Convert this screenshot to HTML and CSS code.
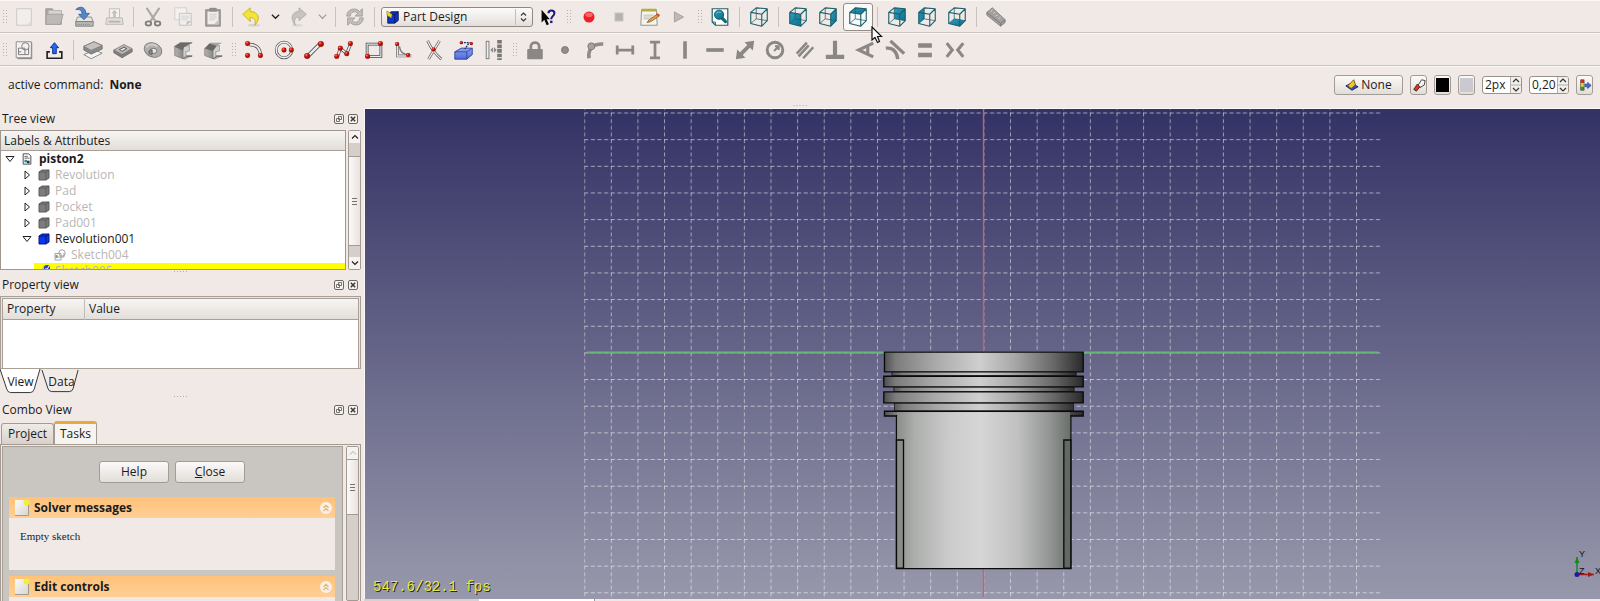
FILE: index.html
```html
<!DOCTYPE html>
<html lang="en">
<head>
<meta charset="utf-8">
<title>piston2 - Part Design</title>
<link rel="stylesheet" href="styles.css">
</head>
<body>
<svg class="defs" aria-hidden="true">
  <defs>
    <linearGradient id="g-paper" x1="0" y1="0" x2="1" y2="1"><stop offset="0" stop-color="#fbfaf9"/><stop offset="1" stop-color="#d9d6d2"/></linearGradient>
    <linearGradient id="g-blue" x1="0" y1="0" x2="0" y2="1"><stop offset="0" stop-color="#8fa4f2"/><stop offset="1" stop-color="#4f69d6"/></linearGradient>
    <radialGradient id="g-red" cx=".35" cy=".3"><stop offset="0" stop-color="#ff9a8a"/><stop offset=".5" stop-color="#f01a10"/><stop offset="1" stop-color="#a80c06"/></radialGradient>
    <linearGradient id="g-teal" x1="0" y1="0" x2="1" y2="1"><stop offset="0" stop-color="#2f9dbb"/><stop offset="1" stop-color="#0d6f8e"/></linearGradient>
    <linearGradient id="g-metal"><stop offset="0" stop-color="#b5b3b1"/><stop offset="1" stop-color="#8b8987"/></linearGradient>
  </defs>
  <symbol id="wire" viewBox="0 0 24 24">
    <path d="M3 7 15 9V22L3 19ZM3 7 9 2 21 3V16L15 22M15 9 21 3" fill="none" stroke="#1b5f6c" stroke-width="1.2" stroke-linejoin="round"/>
    <path d="M9 2V14L3 19M9 14 21 16" fill="none" stroke="#1b5f6c" stroke-width=".8"/>
  </symbol>
  <symbol id="dot" viewBox="0 0 6 6"><circle cx="3" cy="3" r="2.6" fill="url(#g-red)" stroke="#8e120c" stroke-width=".5"/></symbol>
  <symbol id="float" viewBox="0 0 10 10">
    <rect x=".5" y=".5" width="9" height="9" rx="1.5" fill="#f6f2ee" stroke="#6b6762"/>
    <path d="M4.500 2.500H7.500V5.500H4.500ZM2.500 4.500H5.500V7.500H2.500Z" fill="#f6f2ee" stroke="#5a5651" stroke-width=".8"/>
  </symbol>
  <symbol id="shut" viewBox="0 0 10 10">
    <rect x=".5" y=".5" width="9" height="9" rx="1.5" fill="#f6f2ee" stroke="#6b6762"/>
    <path d="M2.800 2.800 7.200 7.200M7.200 2.800 2.800 7.200" stroke="#3c3a37" stroke-width="1.5"/>
  </symbol>
  <symbol id="boxgray" viewBox="0 0 12 12">
    <path d="M1 3 4 1H11V9L8 11H1Z" fill="#7d7d7d" stroke="#5c5c5c"/><path d="M1 3H8L11 1M8 3V11" fill="none" stroke="#555" stroke-width=".8"/>
  </symbol>
  <symbol id="boxblue" viewBox="0 0 12 12">
    <path d="M1 3 4 1H11V9L8 11H1Z" fill="#0a35f5" stroke="#081a70"/><path d="M1 3H8L11 1M8 3V11" fill="none" stroke="#07155c" stroke-width=".9"/>
  </symbol>
  <symbol id="sketchlet" viewBox="0 0 12 12">
    <circle cx="8" cy="4" r="3.200" fill="none" stroke="#a2a2a2"/><path d="M1 4.500H7V11H1ZM3 8H10V4" fill="none" stroke="#a2a2a2"/><rect x="1.500" y="6" width="2" height="3" fill="#8d8d8d"/>
  </symbol>
  <symbol id="note" viewBox="0 0 16 18">
    <rect x="1" y="1" width="13" height="15" fill="url(#g-paper)"/><path d="M1 16.500H14.500V5" fill="none" stroke="#a09a92"/><circle cx="12.500" cy="3.500" r="3" fill="#f2ee3c"/>
  </symbol>
  <symbol id="fold" viewBox="0 0 12 12">
    <circle cx="6" cy="6" r="6" fill="#f7f1ea"/><path d="M3.500 5.800 6 3.300 8.500 5.800M3.500 9 6 6.500 8.500 9" fill="none" stroke="#e9b579" stroke-width="1.300"/>
  </symbol>
</svg>

<header class="toolbars">
  <div class="bar" role="toolbar" aria-label="File">
    <span class="handle first"></span>
    <button class="tool" aria-label="New"><svg class="ico" viewBox="0 0 24 24"><path d="M4 3H20V21H4Z" fill="#f1eeec" stroke="#cbc7c3"/><path d="M20 16 15 21H20Z" fill="#dedad7"/></svg></button>
    <button class="tool" aria-label="Open"><svg class="ico" viewBox="0 0 24 24"><path d="M3 3H10L12 5H20V20H3Z" fill="#aaa7a4" stroke="#999"/><path d="M6 5H20V10H6Z" fill="#d6d3d1"/><path d="M4 9H22L19 20H3Z" fill="#bcb9b6" stroke="#a4a19e"/></svg></button>
    <button class="tool" aria-label="Save"><svg class="ico" viewBox="0 0 24 24"><path d="M5 12H20L22 17H3Z" fill="#e4e4e2" stroke="#8d8d8b"/><path d="M3 17H22V22H3Z" fill="#b9b9b7" stroke="#7d7d7b"/><path d="M5 20H18" stroke="#777" stroke-dasharray="1 1"/><path d="M3 4C6 0 14 0 14 8H18L12 15 6 9H10C10 5 7 3 3 4Z" fill="#5587c6" stroke="#2c5896" stroke-width=".8"/></svg></button>
    <button class="tool" aria-label="Print"><svg class="ico" viewBox="0 0 24 24"><path d="M7 3H18V13H7Z" fill="#f5f3f1" stroke="#bdbab7"/><path d="M12.500 4 16 8H14V12H11V8H9Z" fill="#c3c0bd"/><path d="M4 13H21L22 20H3Z" fill="#e3e0dd" stroke="#b9b6b3"/><path d="M6 17H19" stroke="#b5b2af" stroke-width="2"/></svg></button>
    <span class="sep"></span>
    <button class="tool" aria-label="Cut"><svg class="ico" viewBox="0 0 24 24"><path d="M5 2 15 17M19 2 9 17" stroke="#aaa7a4" stroke-width="2.200"/><ellipse cx="7" cy="19" rx="3" ry="2.300" fill="none" stroke="#807d7a" stroke-width="2"/><ellipse cx="17" cy="19" rx="3" ry="2.300" fill="none" stroke="#807d7a" stroke-width="2"/></svg></button>
    <button class="tool" aria-label="Copy"><svg class="ico" viewBox="0 0 24 24"><path d="M3 2H16V15H3Z" fill="#f4f2f0" stroke="#d0cdca"/><path d="M8 8H21V21H8Z" fill="#f0eeec" stroke="#c3c0bd"/><path d="M10 11H19M10 13H19M10 15H17" stroke="#d5d2cf"/><path d="M21 16 16 21V17Z" fill="#bbb"/></svg></button>
    <button class="tool" aria-label="Paste"><svg class="ico" viewBox="0 0 24 24"><path d="M4 4H20V22H4Z" fill="#a19e9b" stroke="#8f8c89"/><path d="M6 6H18V20H6Z" fill="#f0eeec"/><rect x="8" y="2" width="8" height="4" fill="#8f8c89"/><path d="M8 9H16M8 11H16M8 13H16M8 15H14" stroke="#cfccc9"/><path d="M18 15 13 20H18Z" fill="#c8c5c2"/></svg></button>
    <span class="sep"></span>
    <button class="tool" aria-label="Undo"><svg class="ico" viewBox="0 0 24 24"><ellipse cx="14" cy="21" rx="7" ry="1.600" fill="#d8d3cf"/><path d="M2 9 10 2V6C19 6 22 14 15 21 17 15 14 12.500 10 12.500V17Z" fill="#f3e43a" stroke="#c9b413"/></svg></button>
    <button class="drop" aria-label="Undo list"><svg class="chev" viewBox="0 0 10 10"><path d="M1 3 5 7 9 3" fill="none" stroke="#222" stroke-width="1.500"/></svg></button>
    <button class="tool" aria-label="Redo"><svg class="ico" viewBox="0 0 24 24"><ellipse cx="10" cy="21" rx="6" ry="1.500" fill="#dcd7d3"/><path d="M20 9 12 2V6C4 6 2 14 8 21 6 15 8 12 12 12V16Z" fill="#c6c3c0" stroke="#b1aeab"/></svg></button>
    <button class="drop" aria-label="Redo list"><svg class="chev" viewBox="0 0 10 10"><path d="M1 3 5 7 9 3" fill="none" stroke="#999" stroke-width="1.300"/></svg></button>
    <span class="sep"></span>
    <button class="tool" aria-label="Refresh"><svg class="ico" viewBox="0 0 24 24"><path d="M3 11C3 3 13 1 17 6L20 3V11H12L15 8C12 5 7 6 7 11Z" fill="#c0bdba" stroke="#a19e9b"/><path d="M21 13C21 21 11 23 7 18L4 21V13H12L9 16C12 19 17 18 17 13Z" fill="#c0bdba" stroke="#a19e9b"/></svg></button>
    <span class="sep"></span>
    <label class="combo"><svg class="comboico" viewBox="0 0 16 16"><path d="M2 5 6 2H14V12L10 15H2Z" fill="#0b37c9" stroke="#06134d"/><path d="M10 5V15M6 5H10L14 2" stroke="#06134d" fill="none"/><path d="M1 1 7 5 6 9 1 6Z" fill="#f2d22d" stroke="#8a7411" stroke-width=".6"/></svg>
      <select class="select" aria-label="Workbench"><option>Part Design</option></select>
      <svg class="updown" viewBox="0 0 8 12"><path d="M1.500 4.500 4 2 6.500 4.500M1.500 7.500 4 10 6.500 7.500" fill="none" stroke="#333" stroke-width="1.100"/></svg></label>
    <button class="tool" aria-label="What's this"><svg class="ico" viewBox="0 0 24 24"><path d="M5 4V18L8 15 10.500 21 13 20 10.500 14.500H14Z" fill="#050505"/><path d="M12.500 8C12.500 4 19 4 19 8 19 11 15.500 11 15.500 14.500" fill="none" stroke="#1a1a80" stroke-width="2.200"/><rect x="14.300" y="16" width="2.600" height="2.600" fill="#1a1a80"/></svg></button>
    <span class="handle"></span>
    <button class="tool" aria-label="Record macro"><svg class="ico" viewBox="0 0 24 24"><circle cx="12" cy="12" r="6" fill="#ee1f25"/><ellipse cx="12" cy="9.500" rx="4" ry="2.500" fill="#f8686a"/></svg></button>
    <button class="tool" aria-label="Stop macro"><svg class="ico" viewBox="0 0 24 24"><rect x="7.500" y="7.500" width="9" height="9" fill="#b5b2af" stroke="#d2cfcc"/></svg></button>
    <button class="tool" aria-label="Edit macros"><svg class="ico" viewBox="0 0 24 24"><path d="M4 4H20L21 21H3Z" fill="#f5f5f0" stroke="#8f8d83"/><path d="M4 3H20V6H4Z" fill="#b5aa43"/><path d="M6 10H17M6 12H15M6 14H12" stroke="#b8b8b4"/><path d="M21 9 12 15 10 18 14 17 23 11Z" fill="#e8a13a" stroke="#7d4a13" stroke-width=".8"/><path d="M20 9.500 22.500 11.500 24 10 21.500 8Z" fill="#d8401f"/></svg></button>
    <button class="tool" aria-label="Run macro"><svg class="ico" viewBox="0 0 24 24"><path d="M7 6.500 17 12 7 17.500Z" fill="#bcb9b6" stroke="#a29f9c"/></svg></button>
    <span class="handle"></span>
    <button class="tool" aria-label="Fit all"><svg class="ico" viewBox="0 0 24 24"><path d="M3.500 3H20.500V21H7L3.500 17.500Z" fill="#fff" stroke="#1c6270" stroke-width="1.300"/><path d="M3.500 17.500H7V21" fill="none" stroke="#1c6270"/><path d="M13 12 18 17" stroke="#16697d" stroke-width="3.500" stroke-linecap="round"/><circle cx="11" cy="9.500" r="5" fill="url(#g-teal)" stroke="#0c4f60"/><path d="M8 8Q10 5.500 13 7" stroke="#7ec6d8" fill="none"/></svg></button>
    <span class="sep"></span>
    <button class="tool" aria-label="Axonometric"><svg class="ico"><use href="#wire"/></svg></button>
    <span class="sep"></span>
    <button class="tool" aria-label="Front"><svg class="ico" viewBox="0 0 24 24"><path d="M3 7 15 9V22L3 19Z" fill="url(#g-teal)"/><use href="#wire"/></svg></button>
    <button class="tool" aria-label="Right"><svg class="ico" viewBox="0 0 24 24"><path d="M15 9 21 3V16L15 22Z" fill="url(#g-teal)"/><use href="#wire"/></svg></button>
    <button class="tool pressed" aria-label="Top"><svg class="ico" viewBox="0 0 24 24"><path d="M3 7 9 2 21 3 15 9Z" fill="url(#g-teal)"/><use href="#wire"/></svg></button>
    <span class="sep"></span>
    <button class="tool" aria-label="Rear"><svg class="ico" viewBox="0 0 24 24"><path d="M9 2 21 3V16L9 14Z" fill="url(#g-teal)"/><use href="#wire"/></svg></button>
    <button class="tool" aria-label="Left"><svg class="ico" viewBox="0 0 24 24"><path d="M3 7 9 2V14L3 19Z" fill="url(#g-teal)"/><use href="#wire"/></svg></button>
    <button class="tool" aria-label="Bottom"><svg class="ico" viewBox="0 0 24 24"><path d="M3 19 9 14 21 16 15 22Z" fill="url(#g-teal)"/><use href="#wire"/></svg></button>
    <span class="sep"></span>
    <button class="tool" aria-label="Measure"><svg class="ico" viewBox="0 0 24 24"><path d="M2 7 8 2 22 15V18L17 22 2 10Z" fill="#a3a19f" stroke="#85827f"/><path d="M2 7 17 19 22 15M17 19V22" fill="none" stroke="#75726f"/><path d="M8 4 6.500 6M11 6.500 9 8M14 9.500 11.500 11M17 12 14.500 14" stroke="#d5d2cf"/></svg></button>
  </div>

  <div class="bar" role="toolbar" aria-label="Sketcher">
    <span class="handle first"></span>
    <button class="tool" aria-label="New sketch"><svg class="ico" viewBox="0 0 24 24"><path d="M5 4H21V22H5Z" fill="#8f8d8b"/><path d="M3.500 3H20V20.500H3.500Z" fill="#f3f1ef" stroke="#8b8987"/><circle cx="13.500" cy="8" r="4" fill="none" stroke="#777"/><path d="M6 10H13V17H6ZM6 14H9M13 17H17V10" fill="none" stroke="#777"/></svg></button>
    <button class="tool" aria-label="Leave sketch"><svg class="ico" viewBox="0 0 24 24"><path d="M7.500 14H4.500V21H20.500V14H17.500" fill="none" stroke="#222" stroke-width="1.800"/><path d="M12.500 4 17 9.500H14.500V16H10.500V9.500H8Z" fill="#2467f5" stroke="#0d2a96"/></svg></button>
    <span class="sep"></span>
    <button class="tool" aria-label="Pad"><svg class="ico" viewBox="0 0 24 24"><path d="M2 17 10 21.500 22 15.500 14 12Z" fill="#f5f5f5" stroke="#777" stroke-width=".9"/><path d="M2 8V12L10 16.500 22 11V7L13 3Z" fill="#8d8b89" stroke="#666" stroke-width=".8"/><path d="M2 8 13 3 22 7 10 12.500Z" fill="#c4c2c0" stroke="#777" stroke-width=".8"/></svg></button>
    <button class="tool" aria-label="Pocket"><svg class="ico" viewBox="0 0 24 24"><path d="M2 12V15L11 20.500 22 14V11Z" fill="#7f7d7b" stroke="#666" stroke-width=".8"/><path d="M2 12 13 6 22 10.500 11 17Z" fill="#b9b7b5" stroke="#777" stroke-width=".8"/><path d="M8 11.500 13 9 16 10.500 11 13.500Z" fill="#e1dfdd" stroke="#555"/></svg></button>
    <button class="tool" aria-label="Revolution"><svg class="ico" viewBox="0 0 24 24"><ellipse cx="12" cy="12" rx="10" ry="7.500" transform="rotate(25 12 12)" fill="#b0aeac" stroke="#7f7d7b"/><ellipse cx="12.500" cy="13" rx="3.800" ry="2.800" fill="#e8e4e2" stroke="#6f6d6b"/><path d="M9 12C6 14 8 18 11 16.500V12Z" fill="#8f8d8b" stroke="#555"/><path d="M4.500 9Q10 3.500 17 8" fill="none" stroke="#cfcdcb" stroke-width="2"/></svg></button>
    <button class="tool" aria-label="Fillet"><svg class="ico" viewBox="0 0 24 24"><path d="M10 9 19 7V13L15 14V18H22L14 22 10 20Z" fill="#d2d0ce" stroke="#85837f" stroke-width=".7"/><path d="M3 8 12 12V21.500L3 18Z" fill="url(#g-metal)" stroke="#777" stroke-width=".8"/><path d="M3 8 9 4H22L14 8Q12 9 12 12Z" fill="#6d6b69" stroke="#5d5b59" stroke-width=".6"/><path d="M12 21.500 16 19H22" fill="none" stroke="#777" stroke-width="1.500"/></svg></button>
    <button class="tool" aria-label="Chamfer"><svg class="ico" viewBox="0 0 24 24"><path d="M10 9 19 7V13L15 14V18H22L14 22 10 20Z" fill="#d2d0ce" stroke="#85837f" stroke-width=".7"/><path d="M3 10 12 13V21.500L3 18Z" fill="url(#g-metal)" stroke="#777" stroke-width=".8"/><path d="M9 4H22L15 8 7 6Z" fill="#a5a3a1"/><path d="M3 10 8 5 16 7.500 12 13Z" fill="#696765"/><path d="M12 21.500 16 19H22" fill="none" stroke="#777" stroke-width="1.500"/></svg></button>
    <span class="handle"></span>
    <button class="tool" aria-label="Arc"><svg class="ico" viewBox="0 0 24 24"><path d="M7 6C14 6 19 10 19 18" fill="none" stroke="#555" stroke-width="3.600"/><path d="M7 6C14 6 19 10 19 18" fill="none" stroke="#eee" stroke-width="2"/><use href="#dot" x="2" y="2" width="6" height="6"/><use href="#dot" x="2" y="15" width="6" height="6"/><use href="#dot" x="16" y="15" width="6" height="6"/></svg></button>
    <button class="tool" aria-label="Circle"><svg class="ico" viewBox="0 0 24 24"><circle cx="12" cy="12" r="8.500" fill="none" stroke="#555" stroke-width="3"/><circle cx="12" cy="12" r="8.500" fill="none" stroke="#eee" stroke-width="1.500"/><use href="#dot" x="9" y="9" width="6" height="6"/><use href="#dot" x="17" y="9" width="6" height="6"/></svg></button>
    <button class="tool" aria-label="Line"><svg class="ico" viewBox="0 0 24 24"><path d="M5 19 19 5" stroke="#555" stroke-width="4.500"/><path d="M5 19 19 5" stroke="#eee" stroke-width="2.500"/><use href="#dot" x="1" y="15" width="7" height="7"/><use href="#dot" x="16" y="2" width="7" height="7"/></svg></button>
    <button class="tool" aria-label="Polyline"><svg class="ico" viewBox="0 0 24 24"><path d="M5 19 8 10 15 16 19 6" fill="none" stroke="#555" stroke-width="3.500"/><path d="M5 19 8 10 15 16 19 6" fill="none" stroke="#eee" stroke-width="1.800"/><use href="#dot" x="1" y="16" width="6" height="6"/><use href="#dot" x="5" y="7" width="6" height="6"/><use href="#dot" x="12" y="13" width="6" height="6"/><use href="#dot" x="16" y="2" width="6" height="6"/></svg></button>
    <button class="tool" aria-label="Rectangle"><svg class="ico" viewBox="0 0 24 24"><path d="M4.500 5.500H19.500V19H4.500Z" fill="none" stroke="#444" stroke-width="3"/><path d="M4.500 5.500H19.500V19H4.500Z" fill="none" stroke="#eee" stroke-width="1.300"/><use href="#dot" x="2" y="16" width="6" height="6"/><use href="#dot" x="16" y="2" width="6" height="6"/></svg></button>
    <button class="tool" aria-label="Sketch fillet"><svg class="ico" viewBox="0 0 24 24"><path d="M5 5V18.500H20" fill="none" stroke="#666" stroke-width="3"/><path d="M5 5V18.500H20" fill="none" stroke="#e6e6e6" stroke-width="1.500"/><path d="M7 8Q8 17 17 17" fill="none" stroke="#777" stroke-width="1.500"/><use href="#dot" x="2" y="3" width="5" height="5"/><use href="#dot" x="14" y="15" width="5" height="5"/></svg></button>
    <button class="tool" aria-label="Trim"><svg class="ico" viewBox="0 0 24 24"><path d="M5 2C8 9 14 17 20 22M18 2 6 22" fill="none" stroke="#666" stroke-width="3"/><path d="M5 2C8 9 14 17 20 22M18 2 6 22" fill="none" stroke="#eee" stroke-width="1.300"/><use href="#dot" x="9" y="9" width="5" height="5"/></svg></button>
    <button class="tool" aria-label="External geometry"><svg class="ico" viewBox="0 0 24 24"><path d="M2 14 9 10H21V17L15 22H2Z" fill="url(#g-blue)" stroke="#293f9c"/><path d="M2 14H15L21 10M15 14V22" fill="none" stroke="#33489f"/><path d="M9 4H20M17 5 13 11" stroke="#222a77" stroke-width="1.500" stroke-dasharray="2 1"/><use href="#dot" x="7" y="2" width="4" height="4"/><use href="#dot" x="18" y="3" width="4" height="4"/></svg></button>
    <button class="tool" aria-label="Construction mode"><svg class="ico" viewBox="0 0 24 24"><path d="M5 2V22" stroke="#777" stroke-width="4"/><path d="M5 3V21" stroke="#eee" stroke-width="2"/><path d="M18 1V23" stroke="#777" stroke-width="5" stroke-dasharray="4 1"/><path d="M8 12 11 9V15ZM15 12 12 9V15Z" fill="#888"/></svg></button>
    <span class="handle"></span>
    <button class="tool" aria-label="Lock"><svg class="ico" viewBox="0 0 24 24"><path d="M7.500 12V8C7.500 2.500 16.500 2.500 16.500 8V12" fill="none" stroke="#8a8784" stroke-width="3"/><rect x="3.500" y="11" width="17" height="11" rx="1" fill="#8a8784"/></svg></button>
    <button class="tool" aria-label="Coincident"><svg class="ico" viewBox="0 0 24 24"><circle cx="12" cy="12" r="3.800" fill="#8f8c89" stroke="#7b7875"/></svg></button>
    <button class="tool" aria-label="Point on object"><svg class="ico" viewBox="0 0 24 24"><path d="M5.500 21C4 12 9 5 21 5.500" fill="none" stroke="#8f8c89" stroke-width="4"/><circle cx="8" cy="8" r="3.800" fill="#a4a19e" stroke="#7b7875"/></svg></button>
    <button class="tool" aria-label="Horizontal distance"><svg class="ico" viewBox="0 0 24 24"><path d="M3.500 7V17M20.500 7V17M3 12H21" stroke="#8a8784" stroke-width="3"/></svg></button>
    <button class="tool" aria-label="Vertical distance"><svg class="ico" viewBox="0 0 24 24"><path d="M6.500 3.500H17.500M6.500 20.500H17.500M12 3V21" stroke="#8a8784" stroke-width="3"/></svg></button>
    <button class="tool" aria-label="Vertical"><svg class="ico" viewBox="0 0 24 24"><path d="M12 2.500V21.500" stroke="#8a8784" stroke-width="4"/></svg></button>
    <button class="tool" aria-label="Horizontal"><svg class="ico" viewBox="0 0 24 24"><path d="M2.500 12H21.500" stroke="#8a8784" stroke-width="4"/></svg></button>
    <button class="tool" aria-label="Length"><svg class="ico" viewBox="0 0 24 24"><path d="M7 17 17 7" stroke="#8a8784" stroke-width="4"/><path d="M2 22 3.500 11.500 12.500 20.500ZM22 2 20.500 12.500 11.500 3.500Z" fill="#8a8784"/></svg></button>
    <button class="tool" aria-label="Radius"><svg class="ico" viewBox="0 0 24 24"><circle cx="12" cy="12" r="8.500" fill="none" stroke="#8a8784" stroke-width="3.200"/><path d="M11 13 16 8M12 8H16V12" fill="none" stroke="#8a8784" stroke-width="2.200"/></svg></button>
    <button class="tool" aria-label="Parallel"><svg class="ico" viewBox="0 0 24 24"><path d="M3 16 14 4M10 21 21 9M5 19 16 7" stroke="#8a8784" stroke-width="2.800"/></svg></button>
    <button class="tool" aria-label="Perpendicular"><svg class="ico" viewBox="0 0 24 24"><path d="M12 2V19M2 19.500H22" stroke="#8a8784" stroke-width="4.500"/></svg></button>
    <button class="tool" aria-label="Angle"><svg class="ico" viewBox="0 0 24 24"><path d="M21 4.500 5 12 21 19.500M15 8V16" fill="none" stroke="#8a8784" stroke-width="3.400"/></svg></button>
    <button class="tool" aria-label="Tangent"><svg class="ico" viewBox="0 0 24 24"><path d="M7 2 22 16M2 10C10 9 14 14 15 22" fill="none" stroke="#8a8784" stroke-width="3.600"/></svg></button>
    <button class="tool" aria-label="Equal"><svg class="ico" viewBox="0 0 24 24"><path d="M4.500 7H19.500M4.500 17.500H19.500" stroke="#8a8784" stroke-width="5"/></svg></button>
    <button class="tool" aria-label="Symmetric"><svg class="ico" viewBox="0 0 24 24"><path d="M3 4.500 9 12 3 19.500M21 4.500 15 12 21 19.500" fill="none" stroke="#8a8784" stroke-width="3.400"/></svg></button>
  </div>

  <div class="bar draft">
    <p class="command">active command: <b>None</b></p>
    <div class="style-tools">
      <button class="btn plane"><svg class="i16" viewBox="0 0 16 16"><path d="M1 9 7 6 15 10 8 14Z" fill="#2a52c9" stroke="#101f63"/><path d="M3 9 10 2 12 8 7 12Z" fill="#f0c435" stroke="#6e5204"/></svg>None</button>
      <button class="btn mini" aria-label="Paint"><svg class="i16" viewBox="0 0 16 16"><path d="M7 8 11 2 15 3 14 8 9 11Z" fill="#f4f4f4" stroke="#333"/><path d="M2 13 6 7 9 10 5 15Z" fill="#d23a21" stroke="#5c150a"/></svg></button>
      <button class="btn mini" aria-label="Line color"><span class="swatch black"></span></button>
      <button class="btn mini" aria-label="Face color"><span class="swatch pale"></span></button>
      <label class="spin"><input class="num" aria-label="Line width" value="2px"><svg class="arrows" viewBox="0 0 10 16"><path d="M0 8H10" stroke="#b5afa8"/><path d="M2 5 5 2 8 5M2 11 5 14 8 11" fill="none" stroke="#333" stroke-width="1.200"/></svg></label>
      <label class="spin"><input class="num" aria-label="Font size" value="0,20"><svg class="arrows" viewBox="0 0 10 16"><path d="M0 8H10" stroke="#b5afa8"/><path d="M2 5 5 2 8 5M2 11 5 14 8 11" fill="none" stroke="#333" stroke-width="1.200"/></svg></label>
      <button class="btn mini" aria-label="Apply"><svg class="i16" viewBox="0 0 16 16"><path d="M3 2H7V6H3Z" fill="#d92b1d"/><path d="M3 6H7V10H3Z" fill="#e8d42b"/><path d="M3 10H7V14H3Z" fill="#2c9d35"/><path d="M3 2H7V14H3Z" fill="none" stroke="#444" stroke-width=".7"/><path d="M8 7H11V5L15 8.500 11 12V10H8Z" fill="#3d6fd0" stroke="#1a3680" stroke-width=".7"/></svg></button>
    </div>
    <span class="grip"></span>
  </div>
</header>

<svg class="cursor" viewBox="0 0 12 18" aria-hidden="true"><path d="M1 1V14L4 11.500 6.500 16.500 8.500 15.500 6.500 10.500H10.500Z" fill="#fff" stroke="#111" stroke-width="1.200"/></svg>

<main class="work">
  <aside class="docks">
    <section class="dock tree-dock">
      <div class="dock-title"><h2 class="name">Tree view</h2><button class="tiny" aria-label="Float"><svg class="i10"><use href="#float"/></svg></button><button class="tiny" aria-label="Close"><svg class="i10"><use href="#shut"/></svg></button></div>
      <div class="tree-row">
        <div class="tree">
          <div class="head"><span class="cell">Labels &amp; Attributes</span></div>
          <ul class="list">
            <li class="item root"><svg class="tw" viewBox="0 0 10 10"><path d="M1 2.500H9L5 7.500Z" fill="#fff" stroke="#222"/></svg><svg class="i12" viewBox="0 0 12 14"><path d="M1.500 1H8L10.500 3.500V13H1.500Z" fill="#fff" stroke="#333"/><path d="M3 4H7M3 6H9" stroke="#555"/><rect x="3" y="8" width="3" height="3" fill="#2f8f9d"/><rect x="6" y="9" width="3" height="3" fill="#333"/></svg><b>piston2</b></li>
            <li class="item l1 off"><svg class="tw" viewBox="0 0 10 10"><path d="M3 1V9L7.500 5Z" fill="#fff" stroke="#222"/></svg><svg class="i12"><use href="#boxgray"/></svg>Revolution</li>
            <li class="item l1 off"><svg class="tw" viewBox="0 0 10 10"><path d="M3 1V9L7.500 5Z" fill="#fff" stroke="#222"/></svg><svg class="i12"><use href="#boxgray"/></svg>Pad</li>
            <li class="item l1 off"><svg class="tw" viewBox="0 0 10 10"><path d="M3 1V9L7.500 5Z" fill="#fff" stroke="#222"/></svg><svg class="i12"><use href="#boxgray"/></svg>Pocket</li>
            <li class="item l1 off"><svg class="tw" viewBox="0 0 10 10"><path d="M3 1V9L7.500 5Z" fill="#fff" stroke="#222"/></svg><svg class="i12"><use href="#boxgray"/></svg>Pad001</li>
            <li class="item l1"><svg class="tw" viewBox="0 0 10 10"><path d="M1 2.500H9L5 7.500Z" fill="#fff" stroke="#222"/></svg><svg class="i12"><use href="#boxblue"/></svg>Revolution001</li>
            <li class="item l2 off"><svg class="i12"><use href="#sketchlet"/></svg>Sketch004</li>
            <li class="item sel off"><svg class="i12" viewBox="0 0 12 12"><use href="#sketchlet"/><circle cx="9" cy="3" r="3" fill="#2b3fc4"/><path d="M7.500 3 9 4.500 11 1" stroke="#fff" fill="none"/></svg>Sketch005</li>
          </ul>
        </div>
        <div class="scroll"><span class="sb-btn"><svg class="i8" viewBox="0 0 8 8"><path d="M1 5.500 4 2.500 7 5.500" fill="none" stroke="#222" stroke-width="1.200"/></svg></span><span class="thumb tree-thumb"></span><span class="sb-btn"><svg class="i8" viewBox="0 0 8 8"><path d="M1 2.500 4 5.500 7 2.500" fill="none" stroke="#222" stroke-width="1.200"/></svg></span></div>
      </div>
    </section>
    <span class="grip"></span>
    <section class="dock">
      <div class="dock-title"><h2 class="name">Property view</h2><button class="tiny" aria-label="Float"><svg class="i10"><use href="#float"/></svg></button><button class="tiny" aria-label="Close"><svg class="i10"><use href="#shut"/></svg></button></div>
      <div class="prop">
        <table class="grid"><thead><tr><th class="col">Property</th><th>Value</th></tr></thead></table>
      </div>
      <div class="tabs-south">
        <button class="south"><svg class="south-bg" viewBox="0 0 42 26" preserveAspectRatio="none"><path d="M0 0 7 21Q8 24.500 11 24.500H31Q34 24.500 35 21L41 0" fill="#fff" stroke="#333"/></svg><span class="south-text">View</span></button>
        <button class="south"><svg class="south-bg" viewBox="0 0 42 26" preserveAspectRatio="none"><path d="M1 1 7 20Q8 23.500 11 23.500H29Q32 23.500 33 20L38 1" fill="#f2ece9" stroke="#333"/></svg><span class="south-text">Data</span></button>
      </div>
    </section>
    <span class="grip"></span>
    <section class="dock combo-dock">
      <div class="dock-title"><h2 class="name">Combo View</h2><button class="tiny" aria-label="Float"><svg class="i10"><use href="#float"/></svg></button><button class="tiny" aria-label="Close"><svg class="i10"><use href="#shut"/></svg></button></div>
      <div class="tabs"><button class="tab">Project</button><button class="tab on">Tasks</button></div>
      <div class="pane">
        <div class="tasks">
          <div class="actions"><button class="btn wide">Help</button><button class="btn wide"><span><u>C</u>lose</span></button></div>
          <section class="task"><div class="task-head"><svg class="i18" viewBox="0 0 16 18"><use href="#note"/></svg><h3 class="task-name">Solver messages</h3><button class="tiny" aria-label="Collapse"><svg class="i12"><use href="#fold"/></svg></button></div><div class="task-body">Empty sketch</div></section>
          <section class="task"><div class="task-head"><svg class="i18" viewBox="0 0 16 18"><use href="#note"/></svg><h3 class="task-name">Edit controls</h3><button class="tiny" aria-label="Collapse"><svg class="i12"><use href="#fold"/></svg></button></div><div class="task-body"></div></section>
        </div>
        <div class="scroll"><span class="sb-btn"><svg class="i8" viewBox="0 0 8 8"><path d="M1 5.500 4 2.500 7 5.500" fill="none" stroke="#aaa"/></svg></span><span class="thumb task-thumb"></span></div>
      </div>
    </section>
  </aside>
  <div class="stage">
    <div class="view">
      <svg class="scene" viewBox="0 2 1235 489" preserveAspectRatio="xMidYMid slice" role="img" aria-label="Piston model, top view">
        <defs>
          <linearGradient id="g-crown"><stop offset="0" stop-color="#4e4e4e"/><stop offset=".06" stop-color="#7c7c7c"/><stop offset=".25" stop-color="#a8a8a8"/><stop offset=".48" stop-color="#cfcfcf"/><stop offset=".65" stop-color="#a9a9a9"/><stop offset=".85" stop-color="#686868"/><stop offset="1" stop-color="#2a2a2a"/></linearGradient>
          <linearGradient id="g-skirt"><stop offset="0" stop-color="#8b8d8b"/><stop offset=".1" stop-color="#acaeac"/><stop offset=".3" stop-color="#cacbca"/><stop offset=".48" stop-color="#d6d6d6"/><stop offset=".7" stop-color="#bfc0bf"/><stop offset=".88" stop-color="#929593"/><stop offset="1" stop-color="#6b6f6c"/></linearGradient>
          <pattern id="p-grid" x="220" y="5.500" width="26.560" height="26.600" patternUnits="userSpaceOnUse">
            <path d="M0 .5H26.560" stroke="#fff" stroke-opacity=".55" stroke-dasharray="4 2.640"/>
            <path d="M.5 0V26.600" stroke="#fff" stroke-opacity=".5" stroke-dasharray="4 2.650"/>
          </pattern>
        </defs>
        <rect x="220" y="0" width="796" height="491" fill="url(#p-grid)"/>
        <path d="M618.500 0V489" stroke="#d85a62" stroke-width="1.300"/>
        <path d="M223 245H1012" stroke="#68b577" stroke-width="2"/>
        <g transform="translate(495 232) scale(.33333)" stroke="#0a0a0a" stroke-width="4">
          <path d="M96 96H648V108H96ZM102 142H642V156H102ZM104 190H640V214H104Z" fill="url(#g-crown)" stroke-width="2"/>
          <path d="M74 38H669V97H74ZM72 110H669V142H72ZM72 157H669V190H72ZM74 215H669V229H74Z" fill="url(#g-crown)"/>
          <path d="M110 229H632V686H110Z" fill="url(#g-skirt)"/>
          <path d="M112 218H630V300H112Z" fill="url(#g-skirt)" stroke="none"/>
          <path d="M110 301H131V685H110Z" fill="#8a8c8a"/>
          <path d="M611 301H632V685H611Z" fill="#626863"/>
        </g>
      </svg>
      <span class="fps">547.6/32.1 fps</span>
      <svg class="axes" viewBox="0 0 28 32" aria-hidden="true"><path d="M5 25V8" stroke="#148a1c" stroke-width="1.500"/><path d="M5 8 7.500 14H2.500Z" fill="#148a1c"/><path d="M5 25.500H22" stroke="#a51a14" stroke-width="1.500"/><path d="M22 25.500 16 23V28Z" fill="#a51a14"/><circle cx="5" cy="25.500" r="2.500" fill="#1c1ca0"/><text x="7" y="8" class="axis-name">Y</text><text x="7" y="25" class="axis-name">Z</text><text x="23" y="25" class="axis-name">X</text></svg>
    </div>
    <div class="doc-tabs"><span class="doc idle"></span><span class="doc current"></span><span class="doc idle rest"></span></div>
  </div>
</main>
</body>
</html>
```

FILE: styles.css
```css
* { box-sizing: border-box; }
html, body { height: 100%; }
body {
  margin: 0;
  display: flex;
  flex-direction: column;
  overflow: hidden;
  position: relative;
  background: #f0e9e6;
  color: #1b1b1b;
  font: 12px/16px "Open Sans", "Noto Sans", sans-serif;
}
button, input, select { font: inherit; color: inherit; margin: 0; }
button { border: 0; padding: 0; background: none; }
svg { display: block; flex: none; }
.defs { position: absolute; width: 0; height: 0; }

.toolbars { flex: none; }
.bar {
  display: flex;
  align-items: center;
  height: 33px;
  border-bottom: 1px solid #cbc4bf;
  border-top: 1px solid #faf7f5;
}
.handle {
  width: 5px;
  height: 16px;
  margin: 0 3px;
  background: radial-gradient(circle, #bab3ad 0 1px, transparent 1px) 0 0 / 3px 3px;
}
.handle.first { margin: 0 2px; }
.sep { width: 1px; height: 20px; margin: 0 4px; background: #c9c2bc; }
.tool {
  width: 30px;
  height: 28px;
  display: flex;
  align-items: center;
  justify-content: center;
  flex: none;
}
.ico { width: 22px; height: 22px; }
.pressed { border: 1px solid #948e88; border-radius: 3px; background: #fbf9f8; }
.drop { width: 17px; height: 28px; display: flex; align-items: center; justify-content: center; }
.chev { width: 9px; height: 9px; }

.combo {
  display: flex;
  align-items: center;
  gap: 3px;
  width: 152px;
  height: 20px;
  margin-left: 2px;
  padding: 0 4px;
  border: 1px solid #8f8983;
  border-radius: 3px;
  background: linear-gradient(#fdfcfb, #e3deda);
}
.comboico { width: 14px; height: 14px; }
.select {
  flex: 1;
  min-width: 0;
  appearance: none;
  border: 0;
  border-right: 1px solid #c5beb8;
  padding: 0;
  height: 16px;
  line-height: 16px;
  background: none;
}
.updown { width: 9px; height: 12px; }

.draft { height: 42px; border-bottom: 0; position: relative; justify-content: space-between; padding: 0 7px 5px 8px; }
.draft > .grip { position: absolute; left: 50%; bottom: 0; transform: translateX(-50%); }
.command { margin: 0; }
.command b { margin-left: 3px; }
.style-tools { display: flex; align-items: center; gap: 7px; }
.btn {
  display: flex;
  align-items: center;
  justify-content: center;
  gap: 2px;
  height: 20px;
  border: 1px solid #a39c95;
  border-radius: 3px;
  background: linear-gradient(#fbfaf8, #e2ddd9);
}
.plane { width: 69px; }
.mini { width: 17px; }
.wide { width: 70px; height: 22px; }
.i16 { width: 14px; height: 14px; }
.swatch { width: 13px; height: 14px; }
.black { background: #000; }
.pale { background: #c9c9cf; }
.spin { display: flex; width: 40px; height: 18px; border: 1px solid #99928b; border-radius: 3px; background: #fff; overflow: hidden; }
.num { flex: 1; min-width: 0; width: 100%; padding: 0 0 0 2px; border: 0; background: none; }
.arrows { width: 11px; height: 16px; border-left: 1px solid #b5afa8; background: #f2eeeb; }

.cursor { position: absolute; left: 871px; top: 26px; width: 12px; height: 18px; z-index: 2; }

.work { flex: 1; min-height: 0; display: flex; }
.docks { flex: none; width: 364px; padding-right: 3px; display: flex; flex-direction: column; overflow: hidden; }
.dock { flex: none; }
.grip {
  flex: none;
  align-self: center;
  width: 15px;
  height: 4px;
  background: radial-gradient(circle, #b3aca6 0 1px, transparent 1px) 0 0 / 3px 3px;
}
.dock-title { display: flex; align-items: center; gap: 4px; height: 22px; padding: 0 3px 0 2px; }
.name { flex: 1; margin: 0; font: inherit; }
.i10 { width: 10px; height: 10px; }
.i12 { width: 12px; height: 12px; }
.i8 { width: 8px; height: 8px; }
.i18 { width: 16px; height: 18px; }

.tree-row { display: flex; gap: 2px; height: 140px; }
.tree { flex: 1; border: 1px solid #9f978f; background: #fff; overflow: hidden; }
.head {
  height: 20px;
  padding: 2px 3px;
  border-bottom: 1px solid #a8a096;
  background: linear-gradient(#f7f5f3, #e2ddd8);
}
.list { margin: 0; padding: 0; list-style: none; }
.item { display: flex; align-items: center; height: 16px; gap: 5px; }
.root { padding-left: 4px; gap: 6px; }
.l1 { padding-left: 21px; }
.l1 .i12 { margin-left: 1px; }
.l2 { padding-left: 53px; }
.sel { margin-left: 33px; padding-left: 4px; background: #ff0; }
.off { color: #b9b6b4; }
.tw { width: 10px; height: 10px; }

.scroll { flex: none; width: 13px; display: flex; flex-direction: column; border: 1px solid #a39b93; border-radius: 2px; background: #d5cec9; }
.sb-btn { flex: none; height: 12px; display: flex; align-items: center; justify-content: center; background: #f5f2f0; }
.thumb {
  border: 1px solid #a39b93;
  border-width: 1px 0;
  background:
    repeating-linear-gradient(#77716b 0 1px, transparent 1px 3px) center / 5px 7px no-repeat,
    linear-gradient(90deg, #fbf9f8, #e9e3df);
}
.tree-thumb { margin: 13px 0 auto; height: 90px; }
.task-thumb { height: 56px; }

.prop { height: 73px; border: 1px solid #a79f98; padding: 1px; background: #e9e4e0; }
.grid { width: 100%; border-collapse: collapse; }
.prop::after { content: ""; display: block; height: 48px; background: #fff; border: 1px solid #a8a096; border-top: 0; }
.grid thead { background: linear-gradient(#f7f5f3, #e2ddd8); }
.grid tr { border: 1px solid #a8a096; height: 21px; }
.grid th { padding: 0 4px; text-align: left; font-weight: 400; }
.grid .col { width: 82px; border-right: 1px solid #c3bcb5; }
.tabs-south { display: flex; height: 26px; }
.south { position: relative; width: 41px; height: 25px; }
.south-bg { position: absolute; inset: 0; width: 100%; height: 100%; }
.south-text { position: relative; }

.combo-dock { flex: 1; display: flex; flex-direction: column; min-height: 0; }
.tabs { flex: none; display: flex; align-items: flex-end; height: 23px; padding-left: 1px; }
.tab { width: 53px; height: 21px; border: 1px solid #a39b93; border-bottom: 0; border-radius: 3px 3px 0 0; background: linear-gradient(#efebe7, #d8d1cb); }
.tab.on { width: 43px; height: 23px; border-top: 3px solid #eba83f; background: #f7f3f0; }
.pane { flex: 1; min-height: 0; display: flex; gap: 3px; padding: 1px 1px 0; border: 1px solid #a39b93; border-bottom: 0; overflow: hidden; }
.tasks { flex: 1; border: 1px solid #a8a096; border-bottom: 0; padding: 14px 7px 0 6px; background: #c9c5c1; overflow: hidden; }
.actions { display: flex; justify-content: center; gap: 6px; margin-bottom: 14px; }
.task { margin-bottom: 6px; }
.task-head { display: flex; align-items: center; gap: 4px; height: 21px; padding: 0 3px 0 5px; background: linear-gradient(#ffc27a, #ffcf95); }
.task-name { flex: 1; margin: 0; font-size: 12px; font-weight: 700; }
.task-body { height: 52px; padding: 10px 11px; font: 11px/16px "Liberation Serif", serif; background: #f0e9e6; }

.stage { flex: 1; min-width: 0; display: flex; flex-direction: column; }
.view {
  flex: 1;
  min-height: 0;
  position: relative;
  overflow: hidden;
  border: 1px solid #faf7f5;
  border-width: 1px 0 0 1px;
  background: linear-gradient(#333265, #9898ac);
}
.scene { width: 100%; height: 100%; }
.fps { position: absolute; left: 8px; bottom: 4px; font: 14px/16px "Liberation Mono", monospace; color: #e8ea3a; text-shadow: 1px 1px 0 #222; }
.axes { position: absolute; right: 0; bottom: 18px; width: 28px; height: 32px; }
.axis-name { font: 9px "Liberation Sans", sans-serif; fill: #111; }
.doc-tabs { flex: none; display: flex; height: 2px; }
.doc { background: #d9d1cb; }
.doc.idle { width: 115px; }
.doc.current { width: 116px; background: #fff; border-right: 1px solid #999; }
.doc.rest { flex: 1; background: #eee7e3; }
```
